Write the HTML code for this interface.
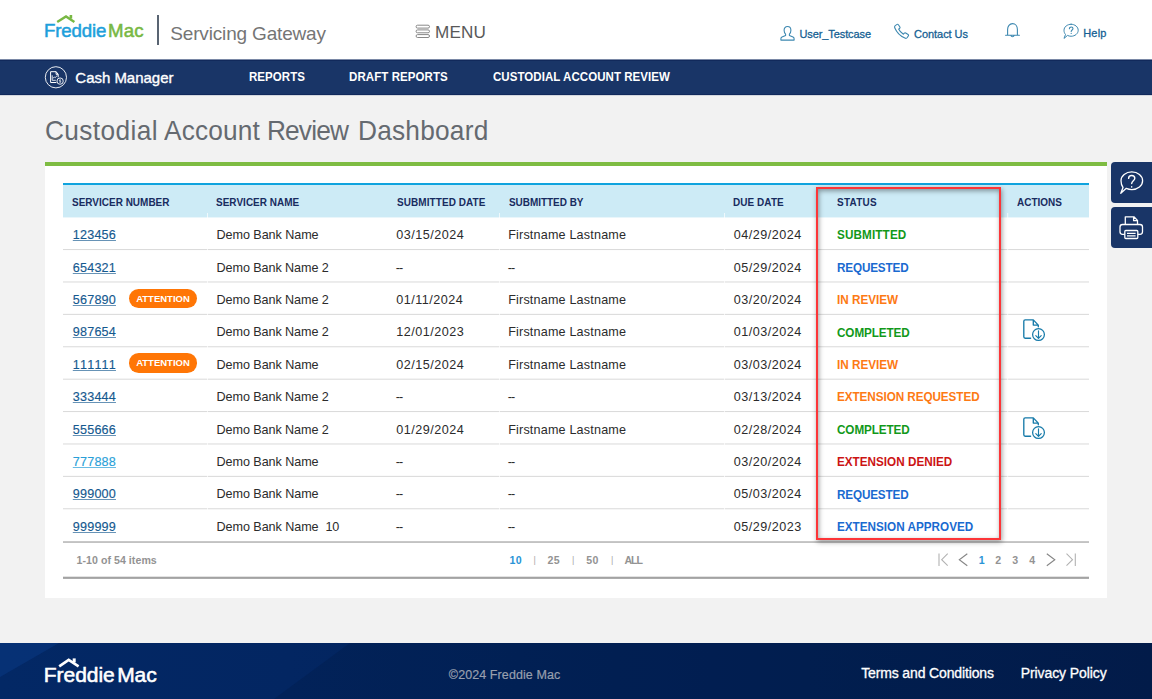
<!DOCTYPE html>
<html>
<head>
<meta charset="utf-8">
<title>Custodial Account Review Dashboard</title>
<style>
*{box-sizing:border-box;margin:0;padding:0}
html,body{width:1152px;height:699px;overflow:hidden;background:#f2f2f2;font-family:"Liberation Sans",sans-serif;}
.abs{position:absolute;white-space:nowrap}
#hdr{position:absolute;left:0;top:0;width:1152px;height:60px;background:#fff}
#nav{position:absolute;left:0;top:60px;width:1152px;height:35px;background:#193567;border-top:1px solid #11295b;border-bottom:1px solid #11295b}
#navt{position:absolute;left:0;top:59px;width:1152px;height:1px;background:#7a88a6}
#navb{position:absolute;left:0;top:95px;width:1152px;height:1px;background:#d3d7de}
#nav .t{position:absolute;color:#fff;font-weight:bold;font-size:12px;top:9px;white-space:nowrap;transform:scaleX(0.96);transform-origin:0 0}
.tt{top:114.5px;font-size:27.5px;color:#656a70;transform:scaleX(0.955);transform-origin:0 0}
#green{position:absolute;left:45px;top:162px;width:1062px;height:4px;background:#7ebc42}
#card{position:absolute;left:45px;top:166px;width:1062px;height:432px;background:#fff}
#thead{position:absolute;left:63px;top:183px;width:1026px;height:34px;background:#cdebf6;border-top:2px solid #0fa3de}
.th{position:absolute;top:195.5px;font-size:10.6px;font-weight:bold;color:#182c60;white-space:nowrap;transform:scaleX(0.94);transform-origin:0 0}
.row{position:absolute;left:63px;width:1026px;height:32px;font-size:12.6px;color:#2b2b2b}
.row span{position:absolute;top:11px;white-space:nowrap}
.row .c1{font-kerning:none;left:9.8px;letter-spacing:0.19px;color:#15598f;text-decoration:underline;text-decoration-color:rgba(21,89,143,0.65);text-decoration-thickness:1px;-webkit-text-stroke:0.15px #15598f}
.row .c2{left:154px}
.row .c3{left:333px}
.row .c4{left:445px}
.row .c5{left:671px}
.row .c6{left:774px;font-weight:bold;font-size:12.6px;top:11.25px;transform:scaleX(0.93);transform-origin:0 0}
.g{color:#12991a}.b{color:#1a6ad0}.o{color:#fd7a14}.r{color:#cc1414}
.att{position:absolute;left:66.2px;top:6.5px;width:67.6px;height:19.4px;border-radius:9.7px;background:#ff7606;color:#fff;font-size:9.5px;font-weight:bold;text-align:center;line-height:19px;font-style:normal;letter-spacing:0px}
#tfoot{display:none}
.pg{position:absolute;top:554px;font-size:10.6px;font-weight:bold;color:#939393;white-space:nowrap}
#redbox{position:absolute;left:816px;top:187px;width:185px;height:353px;border:2px solid #fc3538;box-shadow:1px 2px 5px rgba(0,0,0,0.38),inset 1px 2px 5px rgba(0,0,0,0.38)}
.side{position:absolute;left:1111px;width:45px;height:40.5px;background:#193567;border-radius:4px}
#foot{position:absolute;left:0;top:643px;width:1152px;height:56px;background:linear-gradient(90deg,#032865 0%,#032662 25%,#02245c 45%,#022156 70%,#031e4f 100%)}

.lg1{top:20.9px;font-size:17.8px;-webkit-text-stroke:0.5px currentColor;display:inline-block;transform:scaleX(1.05);transform-origin:0 0}
#sg{left:171px;top:23px;font-size:19px;color:#757575}
#menu{left:436.500px;top:23.6px;font-size:16px;color:#595959;transform:scaleX(1.07);transform-origin:0 0}
.hl{font-size:11px;color:#155f93;-webkit-text-stroke:0.28px #155f93}
.row span.dd{letter-spacing:-0.9px;margin-left:-0.3px}
.row .lt{color:#2a9fd8;-webkit-text-stroke-color:#2a9fd8;text-decoration-color:rgba(42,159,216,0.7)}
.act{position:absolute;left:957px;top:1.6px}
.pg.bl{color:#2a94d6}
.pg.sep{font-weight:normal;color:#aaa;font-size:9px;top:555px}
.lg2{top:20px;font-size:21px;color:#fff;-webkit-text-stroke:0.55px #fff}
.fl{font-size:14px;color:#fff;-webkit-text-stroke:0.3px #fff}
</style>
<style id="fitcss">
.row .c5{letter-spacing:0.50px;margin-left:-0.36px}
.row .c3{letter-spacing:0.50px;margin-left:0.16px}
#lg1a{letter-spacing:-0.16px;margin-left:-1.16px}
#lg1b{letter-spacing:0.12px;margin-left:-0.45px}
#sg{letter-spacing:-0.17px;margin-left:-0.70px}
#menu{letter-spacing:0.16px;margin-left:-1.75px}
#f1{letter-spacing:-0.10px;margin-left:-0.50px}
#f2{letter-spacing:-0.06px;margin-left:-0.41px}
#f3{letter-spacing:0.17px;margin-left:-0.75px}
#f4{letter-spacing:-0.02px;margin-left:-0.70px}
#f5{letter-spacing:0.04px;margin-left:-0.11px}
#f6{letter-spacing:0.07px;margin-left:0.31px}
#f7{letter-spacing:0.05px;margin-left:-0.14px}
#tw1{letter-spacing:0.39px;margin-left:-0.06px}
#tw2{letter-spacing:0.17px;margin-left:1.81px}
#tw3{letter-spacing:-0.89px;margin-left:-0.19px}
#tw4{letter-spacing:0.23px;margin-left:-0.50px}
#f8{letter-spacing:0.02px;margin-left:0.02px}
#f9{letter-spacing:0.04px;margin-left:-0.05px}
#f10{letter-spacing:0.10px;margin-left:0.27px}
#f11{letter-spacing:-0.02px;margin-left:-0.23px}
#f12{letter-spacing:0.08px;margin-left:-0.89px}
#f13{letter-spacing:0.27px;margin-left:-0.11px}
#f14{letter-spacing:0.00px;margin-left:-0.25px}
#f16{letter-spacing:-0.06px;margin-left:-0.50px}
#f18{letter-spacing:0.18px;margin-left:0.16px}
#f20{letter-spacing:0.13px;margin-left:0.14px}
#f22{letter-spacing:-0.07px;margin-left:-0.50px}
#f26{letter-spacing:-0.17px;margin-left:-0.36px}
#f29{letter-spacing:-0.07px;margin-left:-0.50px}
#f31{letter-spacing:0.18px;margin-left:0.16px}
#f33{letter-spacing:-0.00px;margin-left:-0.36px}
#f35{letter-spacing:-0.07px;margin-left:-0.50px}
#f37{letter-spacing:0.18px;margin-left:0.16px}
#f39{letter-spacing:-0.10px;margin-left:-0.11px}
#f42{letter-spacing:-0.06px;margin-left:-0.50px}
#f44{letter-spacing:0.18px;margin-left:0.16px}
#f46{letter-spacing:-0.00px;margin-left:-0.36px}
#f48{letter-spacing:-0.07px;margin-left:-0.50px}
#f52{letter-spacing:-0.07px;margin-left:-0.36px}
#f54{letter-spacing:-0.07px;margin-left:-0.50px}
#f56{letter-spacing:0.18px;margin-left:0.16px}
#f58{letter-spacing:-0.10px;margin-left:-0.11px}
#f60{letter-spacing:-0.06px;margin-left:-0.50px}
#f64{letter-spacing:0.00px;margin-left:-0.36px}
#f66{letter-spacing:-0.06px;margin-left:-0.50px}
#f70{letter-spacing:-0.17px;margin-left:-0.36px}
#f72{letter-spacing:-0.06px;margin-left:-0.50px}
#f76{letter-spacing:0.00px;margin-left:-0.36px}
#f77{letter-spacing:0.05px;margin-left:-0.50px}
#f78{letter-spacing:0.25px;margin-left:-0.50px}
#f79{letter-spacing:0.25px;margin-left:0.06px}
#f80{letter-spacing:0.50px;margin-left:0.16px}
#f81{letter-spacing:-1.00px;margin-left:-0.06px}
#f82{letter-spacing:0.00px;margin-left:-0.45px}
#f83{letter-spacing:0.00px;margin-left:-0.05px}
#f84{letter-spacing:0.00px;margin-left:-0.05px}
#f85{letter-spacing:0.00px;margin-left:-0.16px}
#lg2a{letter-spacing:-0.04px;margin-left:-1.25px}
#lg2b{letter-spacing:-0.12px;margin-left:-0.75px}
#f86{letter-spacing:0.09px;margin-left:-0.16px}
#f87{letter-spacing:-0.14px;margin-left:0.20px}
#f88{letter-spacing:-0.10px;margin-left:-0.20px}
</style>
</head>
<body>
<div id="hdr">
  <svg class="abs" style="left:40px;top:8px" width="120" height="44" viewBox="0 0 120 44">
    <path d="M17.2 13.9 L26 8.4 L34.4 13.9" fill="none" stroke="#78b843" stroke-width="2.4"/>
    <rect x="29.6" y="7" width="2.6" height="3.6" fill="#78b843"/>
  </svg>
  <span id="lg1a" class="abs lg1 fit" style="left:45px;color:#1e9fdb">Freddie</span><span id="lg1b" class="abs lg1 fit" style="left:108px;color:#78b843">Mac</span>
  <div class="abs" style="left:157px;top:15px;width:2px;height:30px;background:#596472"></div>
  <span id="sg" class="abs fit">Servicing Gateway</span>
  <svg class="abs" style="left:415px;top:24px" width="16" height="15" viewBox="0 0 16 15" fill="none" stroke="#7a7a7a" stroke-width="0.9">
    <rect x="1.1" y="1.2" width="13.4" height="2.9" rx="1.45"/><rect x="1.1" y="5.9" width="13.4" height="2.9" rx="1.45"/><rect x="1.1" y="10.6" width="13.4" height="2.9" rx="1.45"/>
  </svg>
  <span id="menu" class="abs fit">MENU</span>
  <svg class="abs" style="left:779px;top:25px" width="17" height="17" viewBox="0 0 17 17" fill="none" stroke="#3d88b0" stroke-width="1.1" stroke-linejoin="round">
    <path d="M8.5 1.5c2.2 0 3.4 1.6 3.4 3.8 0 1.6-.6 3-1.5 3.8v1.3l3.6 1.6c.7.3 1.1.9 1.1 1.7v1.4H1.9v-1.4c0-.8.4-1.4 1.1-1.7l3.6-1.6V9.1C5.700 8.300 5.100 6.900 5.100 5.300c0-2.200 1.200-3.800 3.400-3.800z"/>
  </svg>
  <span id="f1" class="abs hl fit" style="left:800px;top:27.9px">User_Testcase</span>
  <svg class="abs" style="left:893px;top:23px" width="18" height="17" viewBox="0 0 18 17" fill="none" stroke="#3d88b0" stroke-width="1.1" stroke-linejoin="round" stroke-linecap="round">
    <path d="M2.2 2.6l1.9-1.2c.5-.3 1-.2 1.300.3l1.500 2.300c.3.5.2 1-.2 1.300l-1.100.8c.8 1.700 2.700 3.800 4.800 5.100l.9-1c.4-.4.9-.5 1.400-.2l2.400 1.500c.5.3.6.9.3 1.300l-1.100 1.700c-.5.700-1.500 1-2.400.6C7.400 13.200 3.500 9 1.700 4.800c-.3-.9-.1-1.700.5-2.200z"/>
  </svg>
  <span id="f2" class="abs hl fit" style="left:914.500px;top:27.9px">Contact Us</span>
  <svg class="abs" style="left:1004px;top:22px" width="17" height="17" viewBox="0 0 17 17" fill="none" stroke="#3d88b0" stroke-width="1.1" stroke-linejoin="round" stroke-linecap="round">
    <path d="M1.600 13.300h13.800M3.600 13.300V7.400c0-3.200 2-5.800 4.900-5.800s4.900 2.600 4.900 5.800v5.900M6.900 13.600a1.700 1.700 0 0 0 3.200 0"/>
  </svg>
  <svg class="abs" style="left:1062px;top:23px" width="18" height="17" viewBox="0 0 18 17" fill="none" stroke="#3d88b0" stroke-width="1" stroke-linejoin="round" stroke-linecap="round">
    <path d="M9.100 1.250c3.900 0 7.100 2.700 7.100 6s-3.200 6-7.100 6c-1.300 0-2.600-.3-3.600-.8L2 15.400l1.500-3.900C2.600 10.400 2 9 2 7.250c0-3.300 3.200-6 7.100-6z"/>
    <path d="M7.400 5.700c0-1 .8-1.700 1.800-1.700s1.800.7 1.800 1.600c0 1.400-1.800 1.400-1.800 2.900M9.200 10.300v.2" stroke-width="1.100"/>
  </svg>
  <span id="f3" class="abs hl fit" style="left:1084px;top:26.9px">Help</span>
</div>
<div id="navt"></div><div id="navb"></div>
<div id="nav">
  <svg class="abs" style="left:44px;top:4px" width="24" height="25" viewBox="0 0 24 25" fill="none" stroke="#fff" stroke-width="1">
    <circle cx="11.900" cy="12.300" r="10.600" stroke-width="0.95" opacity="0.95"/>
    <path d="M12.400 17.500H6.600V6.700h5.500l2.100 2.600v3M12.100 6.700v2.600h2.100" stroke-width="1" stroke-linejoin="round"/>
    <path d="M8.200 10.300v5h3.600" stroke-width="0.850"/>
    <path d="M8.900 13.100l1.500-.9.900.5 1.900-2.300" stroke-width="0.800"/>
    <circle cx="16.100" cy="16.100" r="3.150" stroke-width="0.900"/>
    <path d="M16.900 15.300c-.3-.5-1.500-.5-1.500.2 0 .8 1.500.4 1.500 1.200 0 .7-1.200.7-1.600.2M16.100 14.300v3.600" stroke-width="0.550"/>
  </svg>
  <span id="f4" class="t fit" style="left:76px;top:7.6px;font-size:15px;font-weight:normal;transform:none;-webkit-text-stroke:0.35px #fff">Cash Manager</span>
  <span id="f5" class="t fit" style="left:249px">REPORTS</span>
  <span id="f6" class="t fit" style="left:349px">DRAFT REPORTS</span>
  <span id="f7" class="t fit" style="left:493px">CUSTODIAL ACCOUNT REVIEW</span>
</div>
<span id="tw1" class="abs tt fit" style="left:45px">Custodial</span><span id="tw2" class="abs tt fit" style="left:162px">Account</span><span id="tw3" class="abs tt fit" style="left:267px">Review</span><span id="tw4" class="abs tt fit" style="left:358px">Dashboard</span>
<div id="green"></div>
<div id="card"></div>
<div id="thead"></div>
<span id="f8" class="th fit" style="left:72.200px">SERVICER NUMBER</span>
<span id="f9" class="th fit" style="left:216.300px">SERVICER NAME</span>
<span id="f10" class="th fit" style="left:396.400px">SUBMITTED DATE</span>
<span id="f11" class="th fit" style="left:508.900px">SUBMITTED BY</span>
<span id="f12" class="th fit" style="left:733.900px">DUE DATE</span>
<span id="f13" class="th fit" style="left:837.300px">STATUS</span>
<span id="f14" class="th fit" style="left:1017px">ACTIONS</span>
<svg class="abs" style="left:63px;top:183px" width="1026" height="400" viewBox="0 0 1026 400"><rect x="0" y="358.1" width="1026" height="1.9" fill="#c2c2c2"/><rect x="0" y="393.7" width="1026" height="2.2" fill="#a3a3a3"/><rect x="0" y="34" width="1026" height="0.45" fill="#cdebf6"/><g fill="#d9d9d9"><rect x="0" y="66.07" width="1026" height="1"/><rect x="0" y="98.47" width="1026" height="1"/><rect x="0" y="130.87" width="1026" height="1"/><rect x="0" y="163.27" width="1026" height="1"/><rect x="0" y="195.67" width="1026" height="1"/><rect x="0" y="228.07" width="1026" height="1"/><rect x="0" y="260.47" width="1026" height="1"/><rect x="0" y="292.87" width="1026" height="1"/><rect x="0" y="325.27" width="1026" height="1"/></g><rect x="144" y="30" width="1" height="327.5" fill="#fff" opacity="0.7"/><rect x="436" y="30" width="1" height="327.5" fill="#fff" opacity="0.7"/><rect x="661" y="30" width="1" height="327.5" fill="#fff" opacity="0.7"/><rect x="944.2" y="30" width="1" height="327.5" fill="#fff" opacity="0.7"/></svg>
<div id="rows">
<div class="row" style="top:217.20px"><span id="f15" class="c1 fit">123456</span><span id="f16" class="c2 fit">Demo Bank Name</span><span id="f17" class="c3 fit">03/15/2024</span><span id="f18" class="c4 fit">Firstname Lastname</span><span id="f19" class="c5 fit">04/29/2024</span><span id="f20" class="c6 g fit">SUBMITTED</span></div>
<div class="row" style="top:249.60px"><span id="f21" class="c1 fit">654321</span><span id="f22" class="c2 fit">Demo Bank Name 2</span><span id="f23" class="c3 dd fit">--</span><span id="f24" class="c4 dd fit">--</span><span id="f25" class="c5 fit">05/29/2024</span><span id="f26" class="c6 b fit">REQUESTED</span></div>
<div class="row" style="top:282.00px"><span id="f27" class="c1 fit">567890</span><i id="f28" class="att fit">ATTENTION</i><span id="f29" class="c2 fit">Demo Bank Name 2</span><span id="f30" class="c3 fit">01/11/2024</span><span id="f31" class="c4 fit">Firstname Lastname</span><span id="f32" class="c5 fit">03/20/2024</span><span id="f33" class="c6 o fit">IN REVIEW</span></div>
<div class="row" style="top:314.40px"><span id="f34" class="c1 fit">987654</span><span id="f35" class="c2 fit">Demo Bank Name 2</span><span id="f36" class="c3 fit">12/01/2023</span><span id="f37" class="c4 fit">Firstname Lastname</span><span id="f38" class="c5 fit">01/03/2024</span><span id="f39" class="c6 g fit">COMPLETED</span><svg class="act" width="27" height="27" viewBox="0 0 27 27"><g fill="none" stroke="#167aa9" stroke-width="1.35" stroke-linejoin="round" stroke-linecap="round">
  <path d="M10.600 22.200H5.200c-.8 0-1.400-.6-1.400-1.400V5.300c0-.8.600-1.400 1.400-1.400h8.100l5 5.200v1.600M13.300 4.100v5h4.800"/>
  <circle cx="18.500" cy="18.550" r="5.900" stroke-width="1.250"/>
  <path d="M18.500 14.800v7.300M15.800 19.600l2.700 2.700 2.700-2.700" stroke-width="1.150"/>
</g></svg></div>
<div class="row" style="top:346.80px"><span id="f40" class="c1 fit">111111</span><i id="f41" class="att fit">ATTENTION</i><span id="f42" class="c2 fit">Demo Bank Name</span><span id="f43" class="c3 fit">02/15/2024</span><span id="f44" class="c4 fit">Firstname Lastname</span><span id="f45" class="c5 fit">03/03/2024</span><span id="f46" class="c6 o fit">IN REVIEW</span></div>
<div class="row" style="top:379.20px"><span id="f47" class="c1 fit">333444</span><span id="f48" class="c2 fit">Demo Bank Name 2</span><span id="f49" class="c3 dd fit">--</span><span id="f50" class="c4 dd fit">--</span><span id="f51" class="c5 fit">03/13/2024</span><span id="f52" class="c6 o fit">EXTENSION REQUESTED</span></div>
<div class="row" style="top:411.60px"><span id="f53" class="c1 fit">555666</span><span id="f54" class="c2 fit">Demo Bank Name 2</span><span id="f55" class="c3 fit">01/29/2024</span><span id="f56" class="c4 fit">Firstname Lastname</span><span id="f57" class="c5 fit">02/28/2024</span><span id="f58" class="c6 g fit">COMPLETED</span><svg class="act" style="top:2.8px" width="27" height="27" viewBox="0 0 27 27"><g fill="none" stroke="#167aa9" stroke-width="1.35" stroke-linejoin="round" stroke-linecap="round">
  <path d="M10.600 22.200H5.200c-.8 0-1.400-.6-1.400-1.400V5.300c0-.8.600-1.400 1.400-1.400h8.100l5 5.200v1.600M13.300 4.100v5h4.800"/>
  <circle cx="18.500" cy="18.550" r="5.900" stroke-width="1.250"/>
  <path d="M18.500 14.800v7.300M15.800 19.600l2.700 2.700 2.700-2.700" stroke-width="1.150"/>
</g></svg></div>
<div class="row" style="top:444.00px"><span id="f59" class="c1 lt fit">777888</span><span id="f60" class="c2 fit">Demo Bank Name</span><span id="f61" class="c3 dd fit">--</span><span id="f62" class="c4 dd fit">--</span><span id="f63" class="c5 fit">03/20/2024</span><span id="f64" class="c6 r fit">EXTENSION DENIED</span></div>
<div class="row" style="top:476.40px"><span id="f65" class="c1 fit">999000</span><span id="f66" class="c2 fit">Demo Bank Name</span><span id="f67" class="c3 dd fit">--</span><span id="f68" class="c4 dd fit">--</span><span id="f69" class="c5 fit">05/03/2024</span><span id="f70" class="c6 b fit">REQUESTED</span></div>
<div class="row" style="top:508.80px"><span id="f71" class="c1 fit">999999</span><span id="f72" class="c2 fit">Demo Bank Name&nbsp; 10</span><span id="f73" class="c3 dd fit">--</span><span id="f74" class="c4 dd fit">--</span><span id="f75" class="c5 fit">05/29/2023</span><span id="f76" class="c6 b fit">EXTENSION APPROVED</span></div>
</div>
<div id="tfoot"></div>
<span id="f77" class="pg fit" style="left:77px">1-10 of 54 items</span>
<span id="f78" class="pg bl fit" style="left:510px">10</span><span class="pg sep" style="left:533.500px">|</span>
<span id="f79" class="pg fit" style="left:547.500px">25</span><span class="pg sep" style="left:572px">|</span>
<span id="f80" class="pg fit" style="left:586px">50</span><span class="pg sep" style="left:611px">|</span>
<span id="f81" class="pg fit" style="left:624.500px">ALL</span>
<svg class="abs" style="left:935px;top:550px" width="145" height="20" viewBox="0 0 145 20" fill="none" stroke-width="1.100">
  <path d="M4 3.500v12.500M12.700 3.700L6.700 9.700l6 6" stroke="#b2b2b2"/>
  <path d="M32.300 3.700L24.300 9.700l8 6" stroke="#858585"/>
  <path d="M111.800 3.700l8 6-8 6" stroke="#858585"/>
  <path d="M131.500 3.700l6 6-6 6M140.300 3.500v12.500" stroke="#b2b2b2"/>
</svg>
<span id="f82" class="pg bl fit" style="left:979.300px">1</span>
<span id="f83" class="pg fit" style="left:995.300px">2</span>
<span id="f84" class="pg fit" style="left:1012.300px">3</span>
<span id="f85" class="pg fit" style="left:1029.500px">4</span>
<div id="redbox"></div>
<div class="side" style="top:162px">
  <svg width="45" height="41" viewBox="0 0 45 41" fill="none" stroke="#fff" stroke-width="1.300" stroke-linejoin="round" stroke-linecap="round">
    <path d="M20.800 9.950c6 0 10.800 3.900 10.800 8.800s-4.800 8.800-10.800 8.800c-2 0-3.900-.45-5.500-1.200L9.800 31.200l2.200-5.700c-1.300-1.800-2-3.900-2-6.750 0-4.900 4.800-8.800 10.800-8.800z"/>
    <path d="M17.600 16.400c0-1.700 1.400-2.900 3.100-2.900s3.100 1.200 3.100 2.800c0 2.500-3.100 2.500-3.100 5.300M20.700 24.700v.3" stroke-width="1.400"/>
  </svg>
</div>
<div class="side" style="top:207px">
  <svg width="44" height="41" viewBox="0 0 44 41" fill="none" stroke="#fff" stroke-width="1.300" stroke-linejoin="round">
    <path d="M14.300 17.500V9.800h8.600l3.600 3.600v4.100M22.600 9.800v3.900h3.900"/>
    <rect x="9" y="17.500" width="22.500" height="9.800" rx="2.500"/>
    <rect x="13.800" y="23.500" width="13" height="8" rx="1" fill="#193567"/>
    <path d="M16 26.300h8.600M16 28.800h8.600"/>
  </svg>
</div>
<div id="foot">
  <svg class="abs" style="left:0;top:0" width="1152" height="56" viewBox="0 0 1152 56">
    <polygon points="0,0 59,0 0,34" fill="#0d3f8f" opacity="0.4"/>
    <polygon points="350,0 1152,0 1152,56 274,56" fill="#020f30" opacity="0.18"/>
    <path d="M59.200 23.300 L68.700 16.900 L78.600 23.300" fill="none" stroke="#fff" stroke-width="2.700"/>
    <rect x="72.700" y="15.400" width="3" height="4" fill="#fff"/>
  </svg>
  <span id="lg2a" class="abs lg2 fit" style="left:45px">Freddie</span><span id="lg2b" class="abs lg2 fit" style="left:118px">Mac</span>
  <span id="f86" class="abs fit" style="left:449px;top:24.7px;font-size:12.500px;color:#989fae;-webkit-text-stroke:0.2px #989fae">©2024 Freddie Mac</span>
  <span id="f87" class="abs fl fit" style="left:861px;top:22px">Terms and Conditions</span>
  <span id="f88" class="abs fl fit" style="left:1021px;top:22px">Privacy Policy</span>
</div>
</body>
</html>
